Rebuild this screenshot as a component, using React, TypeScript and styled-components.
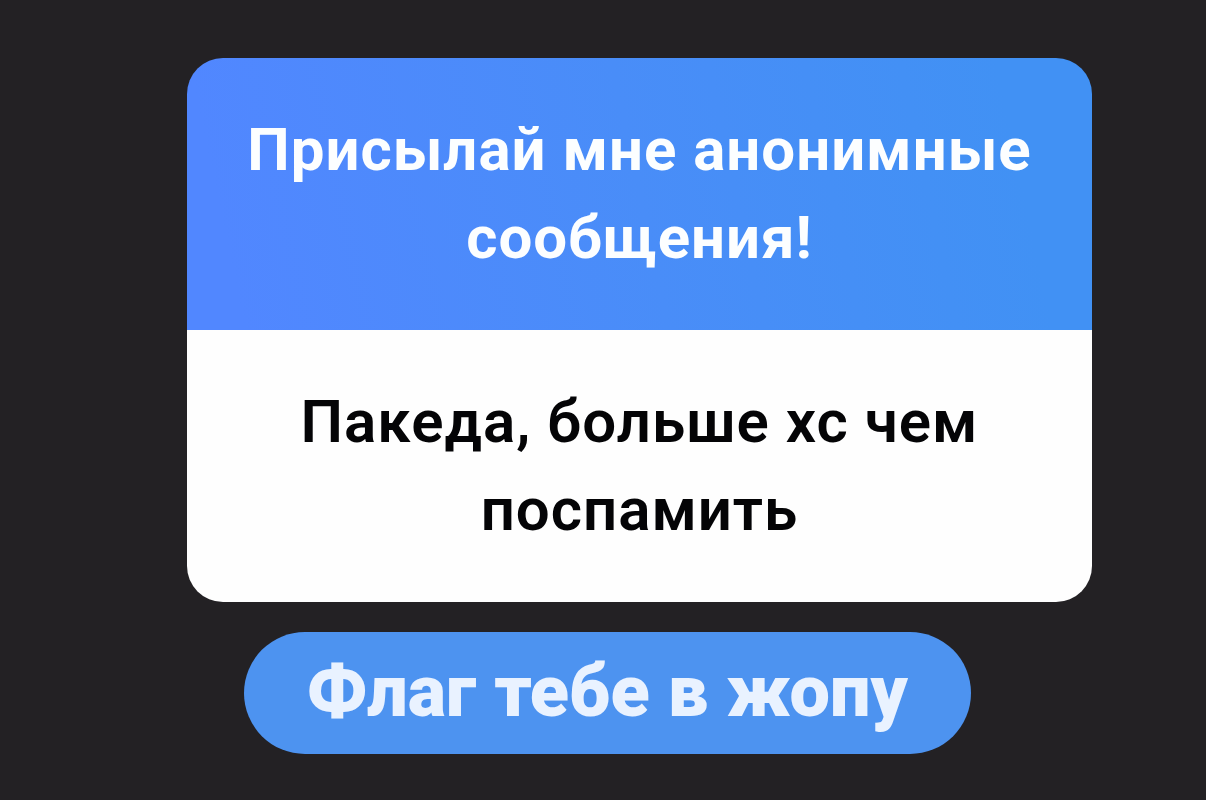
import React from "react";
import styled, { createGlobalStyle } from "styled-components";

const GlobalStyle = createGlobalStyle`
  * { box-sizing: border-box; }
  body {
    margin: 0;
    background: #232124;
    font-family: Roboto, "Liberation Sans", sans-serif;
  }
`;

const Page = styled.main`
  min-height: 100vh;
  display: flex;
  flex-direction: column;
  align-items: stretch;
  gap: 30px;
  padding: 58px 114px 46px 187px;
`;

const Card = styled.article`
  border-radius: 36px;
  overflow: hidden;
  text-align: center;
  font-size: 60px;
  line-height: 88px;
  font-weight: 600;
  letter-spacing: 1px;
`;

const Prompt = styled.h1`
  margin: 0;
  padding: 48px 56px;
  font: inherit;
  font-weight: 700;
  color: #fcfeff;
  background: linear-gradient(78deg, #5187ff 6%, #498df8 50%, #4191f4 90%);
`;

const Message = styled.p`
  margin: 0;
  padding: 48px 100px;
  color: #040406;
  background: #fefefe;
`;

const Reply = styled.p`
  align-self: flex-start;
  margin: 0 0 0 57px;
  padding: 16px 63px 18px;
  border-radius: 61px;
  background: #4d93f0;
  color: #e9f2ff;
  font-size: 72px;
  line-height: 88px;
  font-weight: 900;
`;

export default function App() {
  return (
    <>
      <GlobalStyle />
      <Page>
        <Card>
          <Prompt>Присылай мне анонимные сообщения!</Prompt>
          <Message>Пакеда, больше хс чем поспамить</Message>
        </Card>
        <Reply>Флаг тебе в жопу</Reply>
      </Page>
    </>
  );
}
